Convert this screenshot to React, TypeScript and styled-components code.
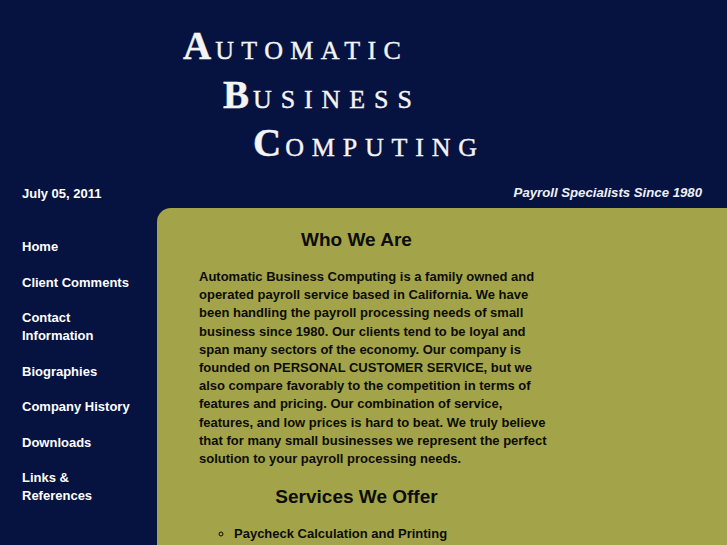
import React from "react";
import styled, { createGlobalStyle } from "styled-components";

const GlobalStyle = createGlobalStyle`
    html, body {
        margin: 0;
        padding: 0;
        background: #061340;
    }
    body {
        font-family: "Liberation Sans", Arial, sans-serif;
    }
`

const Page = styled.div`
    min-height: 100vh;
    background: #061340;
    color: #ffffff;
    display: flex;
    flex-direction: column;
    overflow: hidden;
`

const Header = styled.header`
    height: 178px;
    box-sizing: border-box;
    padding: 26px 0 0 183px;
`

const Logo = styled.div`
    font-family: "Liberation Serif", "Times New Roman", serif;
    color: #f4f4f4;
    display: flex;
    flex-direction: column;
`

const LogoLine = styled.div<{ $indent: number; $spacing: number }>`
    padding-left: ${p => p.$indent}px;
    height: 48.5px;
    line-height: 40px;
    font-size: 26px;
    letter-spacing: ${p => p.$spacing}px;
    -webkit-text-stroke: 0.4px #f4f4f4;
    white-space: nowrap;
    .big{
        font-size: 39px;
        font-weight: bold;
        letter-spacing: 4px;
    }
`

const Strap = styled.div`
    height: 30px;
    display: flex;
    align-items: center;
    justify-content: space-between;
    padding: 0 25px 0 22px;
`

const DateText = styled.div`
    font-size: 13px;
    font-weight: bold;
`

const Tagline = styled.div`
    font-size: 13.2px;
    font-weight: bold;
    font-style: italic;
    color: #eef0f6;
    margin-top: -2px;
`

const Body = styled.div`
    flex: 1;
    display: grid;
    grid-template-columns: 157px 1fr;
`

const Nav = styled.nav`
    display: flex;
    flex-direction: column;
    gap: 17.5px;
    padding: 30px 0 0 22px;
`

const NavLink = styled.a`
    color: #ffffff;
    text-decoration: none;
    font-size: 13px;
    font-weight: bold;
    line-height: 18px;
    width: 110px;
`

const Panel = styled.main`
    background: #a3a449;
    border-top-left-radius: 14px;
    padding: 20px 0 0 42px;
    color: #0c0c08;
`

const Heading = styled.h2`
    margin: 0;
    width: 315px;
    text-align: center;
    font-size: 19px;
    line-height: 24px;
    font-weight: bold;
`

const Para = styled.p`
    margin: 16px 0 17px;
    font-size: 13px;
    font-weight: bold;
    line-height: 18.2px;
    white-space: nowrap;
`

const List = styled.ul`
    margin: 16px 0 0;
    padding-left: 35px;
    list-style: circle;
    font-size: 13px;
    font-weight: bold;
    line-height: 18px;
`

const navItems = [
    ["Home"],
    ["Client Comments"],
    ["Contact", "Information"],
    ["Biographies"],
    ["Company History"],
    ["Downloads"],
    ["Links &", "References"],
]

const lines = [
    "Automatic Business Computing is a family owned and",
    "operated payroll service based in California. We have",
    "been handling the payroll processing needs of small",
    "business since 1980. Our clients tend to be loyal and",
    "span many sectors of the economy. Our company is",
    "founded on PERSONAL CUSTOMER SERVICE, but we",
    "also compare favorably to the competition in terms of",
    "features and pricing. Our combination of service,",
    "features, and low prices is hard to beat. We truly believe",
    "that for many small businesses we represent the perfect",
    "solution to your payroll processing needs.",
]

const App = () => {
    return (
        <Page>
            <GlobalStyle />
            <Header>
                <Logo>
                    <LogoLine $indent={0} $spacing={7.4}><span className="big">A</span>UTOMATIC</LogoLine>
                    <LogoLine $indent={40} $spacing={8.9}><span className="big">B</span>USINESS</LogoLine>
                    <LogoLine $indent={70} $spacing={7.8}><span className="big">C</span>OMPUTING</LogoLine>
                </Logo>
            </Header>
            <Strap>
                <DateText>July 05, 2011</DateText>
                <Tagline>Payroll Specialists Since 1980</Tagline>
            </Strap>
            <Body>
                <Nav>
                    {navItems.map((item, i) => (
                        <NavLink href="#" key={i}>
                            {item.map((l, j) => (
                                <React.Fragment key={j}>{j > 0 && <br />}{l}</React.Fragment>
                            ))}
                        </NavLink>
                    ))}
                </Nav>
                <Panel>
                    <Heading>Who We Are</Heading>
                    <Para>
                        {lines.map((l, i) => (
                            <React.Fragment key={i}>{i > 0 && <br />}{l}</React.Fragment>
                        ))}
                    </Para>
                    <Heading>Services We Offer</Heading>
                    <List>
                        <li>Paycheck Calculation and Printing</li>
                    </List>
                </Panel>
            </Body>
        </Page>
    )
}

export default App
